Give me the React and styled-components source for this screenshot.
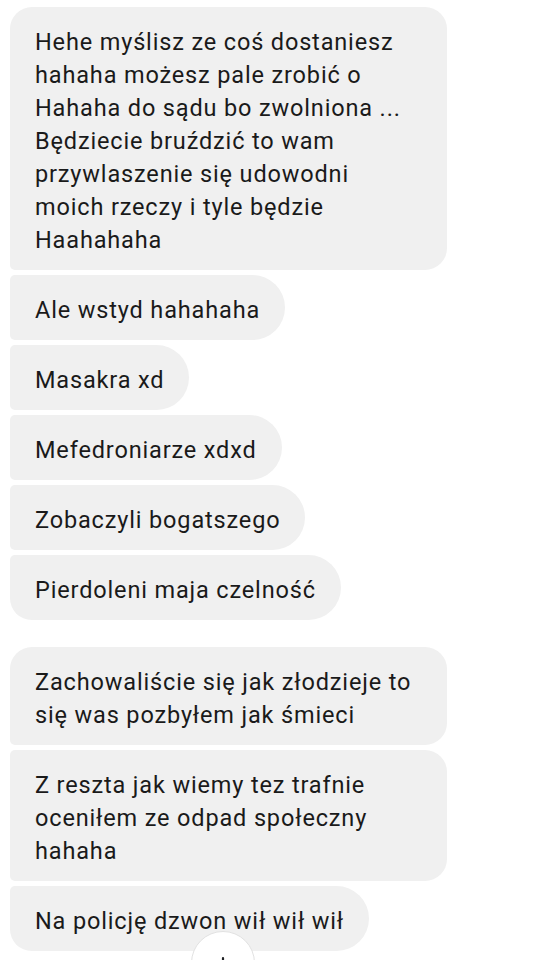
import styled, { createGlobalStyle } from 'styled-components';

const GlobalStyle = createGlobalStyle`
  html, body {
    margin: 0;
    padding: 0;
    background: #ffffff;
  }
  body {
    font-family: Roboto, 'Noto Sans', sans-serif;
    overflow: hidden;
  }
`;

const groups = [
  [
    {
      id: 1,
      lines: [
        'Hehe myślisz ze coś dostaniesz',
        'hahaha możesz pale zrobić o',
        'Hahaha do sądu bo zwolniona ...',
        'Będziecie bruździć to wam',
        'przywlaszenie się udowodni',
        'moich rzeczy i tyle będzie',
        'Haahahaha',
      ],
    },
    { id: 2, lines: ['Ale wstyd hahahaha'] },
    { id: 3, lines: ['Masakra xd'] },
    { id: 4, lines: ['Mefedroniarze xdxd'] },
    { id: 5, lines: ['Zobaczyli bogatszego'] },
    { id: 6, lines: ['Pierdoleni maja czelność'] },
  ],
  [
    {
      id: 7,
      lines: ['Zachowaliście się jak złodzieje to', 'się was pozbyłem jak śmieci'],
    },
    {
      id: 8,
      lines: ['Z reszta jak wiemy tez trafnie', 'oceniłem ze odpad społeczny', 'hahaha'],
    },
    { id: 9, lines: ['Na policję dzwon wił wił wił'] },
  ],
];

export default function App() {
  return (
    <>
      <GlobalStyle />
      <Screen>
        <Thread>
          {groups.map((group, gi) => (
            <Group key={gi}>
              {group.map((msg, i) => {
                const multi = msg.lines.length > 1;
                return (
                  <Bubble
                    key={msg.id}
                    $wide={multi}
                    $first={i === 0}
                    $last={i === group.length - 1}
                  >
                    {msg.lines.map((line) => (
                      <Line key={line}>{line}</Line>
                    ))}
                  </Bubble>
                );
              })}
            </Group>
          ))}
        </Thread>
        <ScrollButton aria-label="scroll down">
          <svg width="24" height="24" viewBox="0 0 24 24" fill="none">
            <path
              d="M12 4v15M6 13l6 6 6-6"
              stroke="#202124"
              strokeWidth="2.2"
              strokeLinecap="round"
              strokeLinejoin="round"
            />
          </svg>
        </ScrollButton>
      </Screen>
    </>
  );
}

const Screen = styled.div`
  position: relative;
  width: 551px;
  height: 960px;
  overflow: hidden;
  background: #ffffff;
`;

const Thread = styled.div`
  padding: 7px 0 0 10px;
  display: flex;
  flex-direction: column;
  gap: 27px;
`;

const Group = styled.div`
  display: flex;
  flex-direction: column;
  align-items: flex-start;
  gap: 5px;
`;

const Bubble = styled.div`
  box-sizing: border-box;
  width: ${(p) => (p.$wide ? '437px' : 'fit-content')};
  max-width: 437px;
  padding: 19px 25px 13px;
  background: #f0f0f0;
  color: #1a1a1a;
  font-size: 23.5px;
  letter-spacing: 0.85px;
  line-height: 33px;
  border-top-right-radius: ${(p) => (p.$wide ? '22px' : '33px')};
  border-bottom-right-radius: ${(p) => (p.$wide ? '22px' : '33px')};
  border-top-left-radius: ${(p) => (p.$first ? '22px' : '5px')};
  border-bottom-left-radius: ${(p) => (p.$last ? '22px' : '5px')};
`;

const Line = styled.span`
  display: block;
  white-space: nowrap;
`;

const ScrollButton = styled.div`
  position: absolute;
  left: 191px;
  top: 931px;
  width: 64px;
  height: 64px;
  border-radius: 50%;
  background: #ffffff;
  border: 1px solid #e2e2e2;
  box-sizing: border-box;
  display: flex;
  align-items: flex-start;
  justify-content: center;
  padding-top: 22px;
`;
